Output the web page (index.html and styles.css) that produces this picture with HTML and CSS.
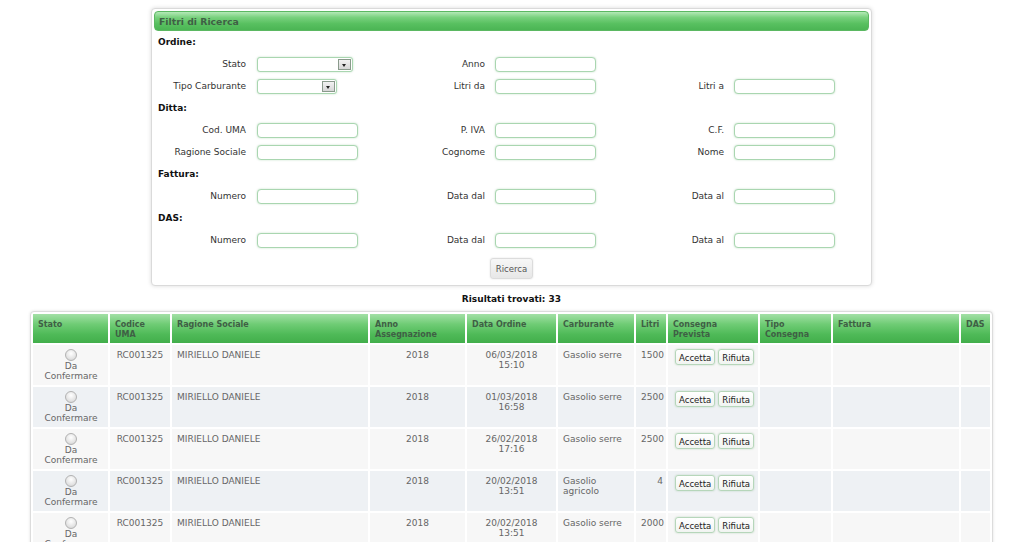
FILE: index.html
```html
<!DOCTYPE html>
<html lang="it">
<head>
<meta charset="utf-8">
<title>Ordini</title>
<link rel="stylesheet" href="styles.css">
</head>
<body>
<div class="panel">
  <div class="panel-title">Filtri di Ricerca</div>
  <div class="form">
    <div class="section">Ordine:</div>
    <div class="row">
      <label class="lbl l1">Stato</label>
      <div class="cell"><span class="select sel-wide"><span class="arrow"></span></span></div>
      <label class="lbl">Anno</label>
      <div class="cell"><span class="input"></span></div>
      <span></span><span></span>
    </div>
    <div class="row">
      <label class="lbl l1">Tipo Carburante</label>
      <div class="cell"><span class="select sel-narrow"><span class="arrow"></span></span></div>
      <label class="lbl">Litri da</label>
      <div class="cell"><span class="input"></span></div>
      <label class="lbl">Litri a</label>
      <div class="cell"><span class="input"></span></div>
    </div>
    <div class="section">Ditta:</div>
    <div class="row">
      <label class="lbl l1">Cod. UMA</label>
      <div class="cell"><span class="input"></span></div>
      <label class="lbl">P. IVA</label>
      <div class="cell"><span class="input"></span></div>
      <label class="lbl">C.F.</label>
      <div class="cell"><span class="input"></span></div>
    </div>
    <div class="row">
      <label class="lbl l1">Ragione Sociale</label>
      <div class="cell"><span class="input"></span></div>
      <label class="lbl">Cognome</label>
      <div class="cell"><span class="input"></span></div>
      <label class="lbl">Nome</label>
      <div class="cell"><span class="input"></span></div>
    </div>
    <div class="section">Fattura:</div>
    <div class="row">
      <label class="lbl l1">Numero</label>
      <div class="cell"><span class="input"></span></div>
      <label class="lbl">Data dal</label>
      <div class="cell"><span class="input"></span></div>
      <label class="lbl">Data al</label>
      <div class="cell"><span class="input"></span></div>
    </div>
    <div class="section">DAS:</div>
    <div class="row">
      <label class="lbl l1">Numero</label>
      <div class="cell"><span class="input"></span></div>
      <label class="lbl">Data dal</label>
      <div class="cell"><span class="input"></span></div>
      <label class="lbl">Data al</label>
      <div class="cell"><span class="input"></span></div>
    </div>
  </div>
  <div class="actions"><button class="btn-search">Ricerca</button></div>
</div>

<div class="results">Risultati trovati: 33</div>

<div class="grid-wrap">
  <table class="grid">
    <thead>
      <tr>
        <th class="c-stato">Stato</th>
        <th class="c-uma">Codice<br>UMA</th>
        <th class="c-rs">Ragione Sociale</th>
        <th class="c-anno">Anno<br>Assegnazione</th>
        <th class="c-data">Data Ordine</th>
        <th class="c-carb">Carburante</th>
        <th class="c-litri">Litri</th>
        <th class="c-cons">Consegna<br>Prevista</th>
        <th class="c-tipo">Tipo<br>Consegna</th>
        <th class="c-fatt">Fattura</th>
        <th class="c-das">DAS</th>
      </tr>
    </thead>
    <tbody>
      <tr>
        <td class="stato"><span class="radio"></span>Da<br>Confermare</td>
        <td class="center">RC001325</td>
        <td>MIRIELLO DANIELE</td>
        <td class="center">2018</td>
        <td class="center">06/03/2018<br>15:10</td>
        <td>Gasolio serre</td>
        <td class="right">1500</td>
        <td class="btns"><button class="btn">Accetta</button><button class="btn">Rifiuta</button></td>
        <td></td><td></td><td></td>
      </tr>
      <tr>
        <td class="stato"><span class="radio"></span>Da<br>Confermare</td>
        <td class="center">RC001325</td>
        <td>MIRIELLO DANIELE</td>
        <td class="center">2018</td>
        <td class="center">01/03/2018<br>16:58</td>
        <td>Gasolio serre</td>
        <td class="right">2500</td>
        <td class="btns"><button class="btn">Accetta</button><button class="btn">Rifiuta</button></td>
        <td></td><td></td><td></td>
      </tr>
      <tr>
        <td class="stato"><span class="radio"></span>Da<br>Confermare</td>
        <td class="center">RC001325</td>
        <td>MIRIELLO DANIELE</td>
        <td class="center">2018</td>
        <td class="center">26/02/2018<br>17:16</td>
        <td>Gasolio serre</td>
        <td class="right">2500</td>
        <td class="btns"><button class="btn">Accetta</button><button class="btn">Rifiuta</button></td>
        <td></td><td></td><td></td>
      </tr>
      <tr>
        <td class="stato"><span class="radio"></span>Da<br>Confermare</td>
        <td class="center">RC001325</td>
        <td>MIRIELLO DANIELE</td>
        <td class="center">2018</td>
        <td class="center">20/02/2018<br>13:51</td>
        <td>Gasolio agricolo</td>
        <td class="right">4</td>
        <td class="btns"><button class="btn">Accetta</button><button class="btn">Rifiuta</button></td>
        <td></td><td></td><td></td>
      </tr>
      <tr>
        <td class="stato"><span class="radio"></span>Da<br>Confermare</td>
        <td class="center">RC001325</td>
        <td>MIRIELLO DANIELE</td>
        <td class="center">2018</td>
        <td class="center">20/02/2018<br>13:51</td>
        <td>Gasolio serre</td>
        <td class="right">2000</td>
        <td class="btns"><button class="btn">Accetta</button><button class="btn">Rifiuta</button></td>
        <td></td><td></td><td></td>
      </tr>
    </tbody>
  </table>
</div>
</body>
</html>
```
FILE: styles.css
```css
html { overflow: hidden; }
body {
  margin: 0;
  background: #fff;
  font-family: "DejaVu Sans", Verdana, sans-serif;
  font-size: 9px;
  color: #333;
}

/* ---------- filter panel ---------- */
.panel {
  box-sizing: border-box;
  width: 721px;
  margin: 8px auto 0;
  padding: 2px 1px 6px;
  background: #fff;
  border: 1px solid #dadada;
  border-radius: 4px;
  box-shadow: 0 0 4px rgba(0, 0, 0, 0.15);
}
.panel-title {
  box-sizing: border-box;
  height: 20px;
  margin: 0 1px;
  padding-left: 4px;
  border: 1px solid #5bb862;
  border-radius: 4px;
  background: linear-gradient(to bottom, #b4e9b7 0%, #79d17e 30%, #58c060 65%, #4bb554 100%);
  color: #3f5f45;
  font-weight: bold;
  font-size: 9.3px;
  line-height: 19px;
}
.form { padding-left: 5px; }
.section {
  height: 22px;
  line-height: 22px;
  font-weight: bold;
  color: #111;
}
.row {
  display: grid;
  grid-template-columns: 98px 102px 136px 102px 137px 102px;
  align-items: center;
  height: 22px;
}
.lbl {
  text-align: right;
  padding-right: 9px;
  color: #333;
}
.lbl.l1 { padding-right: 10px; }
.cell { display: flex; align-items: center; }
.input, .select {
  box-sizing: border-box;
  display: inline-flex;
  justify-content: flex-end;
  align-items: center;
  height: 15px;
  margin-left: 1px;
  background: #fff;
  border: 1px solid #a9d6b0;
  border-radius: 4px;
  box-shadow: 0 0 2px rgba(110, 180, 120, 0.45);
}
.input { width: 101px; }
.sel-wide { width: 96px; }
.sel-narrow { width: 80px; }
.select { border-radius: 3px; padding-right: 1px; }
.arrow {
  box-sizing: border-box;
  position: relative;
  width: 13px;
  height: 11px;
  border: 1px solid #8a9a8c;
  background: linear-gradient(to bottom, #f2f2f2, #d6d6d6);
}
.arrow::after {
  content: "";
  position: absolute;
  left: 3px;
  top: 4px;
  border-left: 2.5px solid transparent;
  border-right: 2.5px solid transparent;
  border-top: 3px solid #222;
}
.actions {
  display: flex;
  justify-content: center;
  margin-top: 7px;
}
.btn-search {
  box-sizing: border-box;
  height: 21px;
  padding: 0 5px;
  font-family: "DejaVu Sans Condensed", "DejaVu Sans", sans-serif;
  font-size: 9.5px;
  color: #555;
  background: linear-gradient(to bottom, #f7f7f7, #e7e7e7);
  border: 1px solid #dcdcdc;
  border-radius: 3px;
  box-shadow: 0 0 2px rgba(0, 0, 0, 0.12);
}

/* ---------- results ---------- */
.results {
  margin-top: 7px;
  text-align: center;
  font-weight: bold;
  line-height: 12px;
  color: #111;
}
.grid-wrap {
  width: 963px;
  box-sizing: border-box;
  margin: 6px auto 0;
  background: #fff;
  border: 1px solid #dcdcdc;
  border-radius: 4px;
  box-shadow: 0 0 3px rgba(0, 0, 0, 0.12);
}
.grid {
  width: 100%;
  table-layout: fixed;
  border-collapse: separate;
  border-spacing: 2px;
}
.grid th, .grid td { box-sizing: border-box; vertical-align: top; }
.grid thead tr { height: 29px; }
.grid th {
  padding: 6px 3px 0 5px;
  text-align: left;
  font-size: 8px;
  line-height: 9.5px;
  font-weight: bold;
  color: #3f5f45;
  background: linear-gradient(to bottom, #a3e0a6 0%, #6fcc75 35%, #4fba58 70%, #42ae4b 100%);
}
.c-stato { width: 75px; }
.c-uma { width: 60px; }
.c-rs { width: 196px; }
.c-anno { width: 95px; }
.c-data { width: 89px; }
.c-carb { width: 76px; }
.c-litri { width: 30px; }
.c-cons { width: 90px; }
.c-tipo { width: 71px; }
.c-fatt { width: 126px; }
.c-das { width: 29px; }

.grid tbody tr { height: 40px; }
.grid td {
  padding: 5px 4px 0 5px;
  font-size: 9px;
  line-height: 10px;
  color: #666;
  background: #f7f7f7;
}
.grid tbody tr:nth-child(even) td { background: #eef1f4; }
.grid td.center { text-align: center; padding-left: 3px; padding-right: 3px; }
.grid td.right { text-align: right; padding-right: 3px; }
.grid td.stato { text-align: center; padding-top: 4px; }
.radio {
  display: block;
  box-sizing: border-box;
  width: 12px;
  height: 12px;
  margin: 0 auto;
  border: 1px solid #b2b2b2;
  border-radius: 50%;
  background: radial-gradient(circle at 50% 35%, #ffffff 0%, #e4e4e4 60%, #cfcfcf 100%);
}
.grid td.btns { padding: 4px 0 0 6px; white-space: nowrap; }
.btn {
  box-sizing: border-box;
  height: 16px;
  margin: 0 3px 0 1px;
  padding: 0 3px;
  font-family: "DejaVu Sans Condensed", "DejaVu Sans", sans-serif;
  font-size: 9.5px;
  color: #222;
  background: linear-gradient(to bottom, #ffffff, #f1f4f1);
  border: 1px solid #b6d6ba;
  border-radius: 3px;
  box-shadow: 0 0 2px rgba(110, 170, 115, 0.4);
  vertical-align: top;
}
.btn + .btn { margin-left: 0; }
```
